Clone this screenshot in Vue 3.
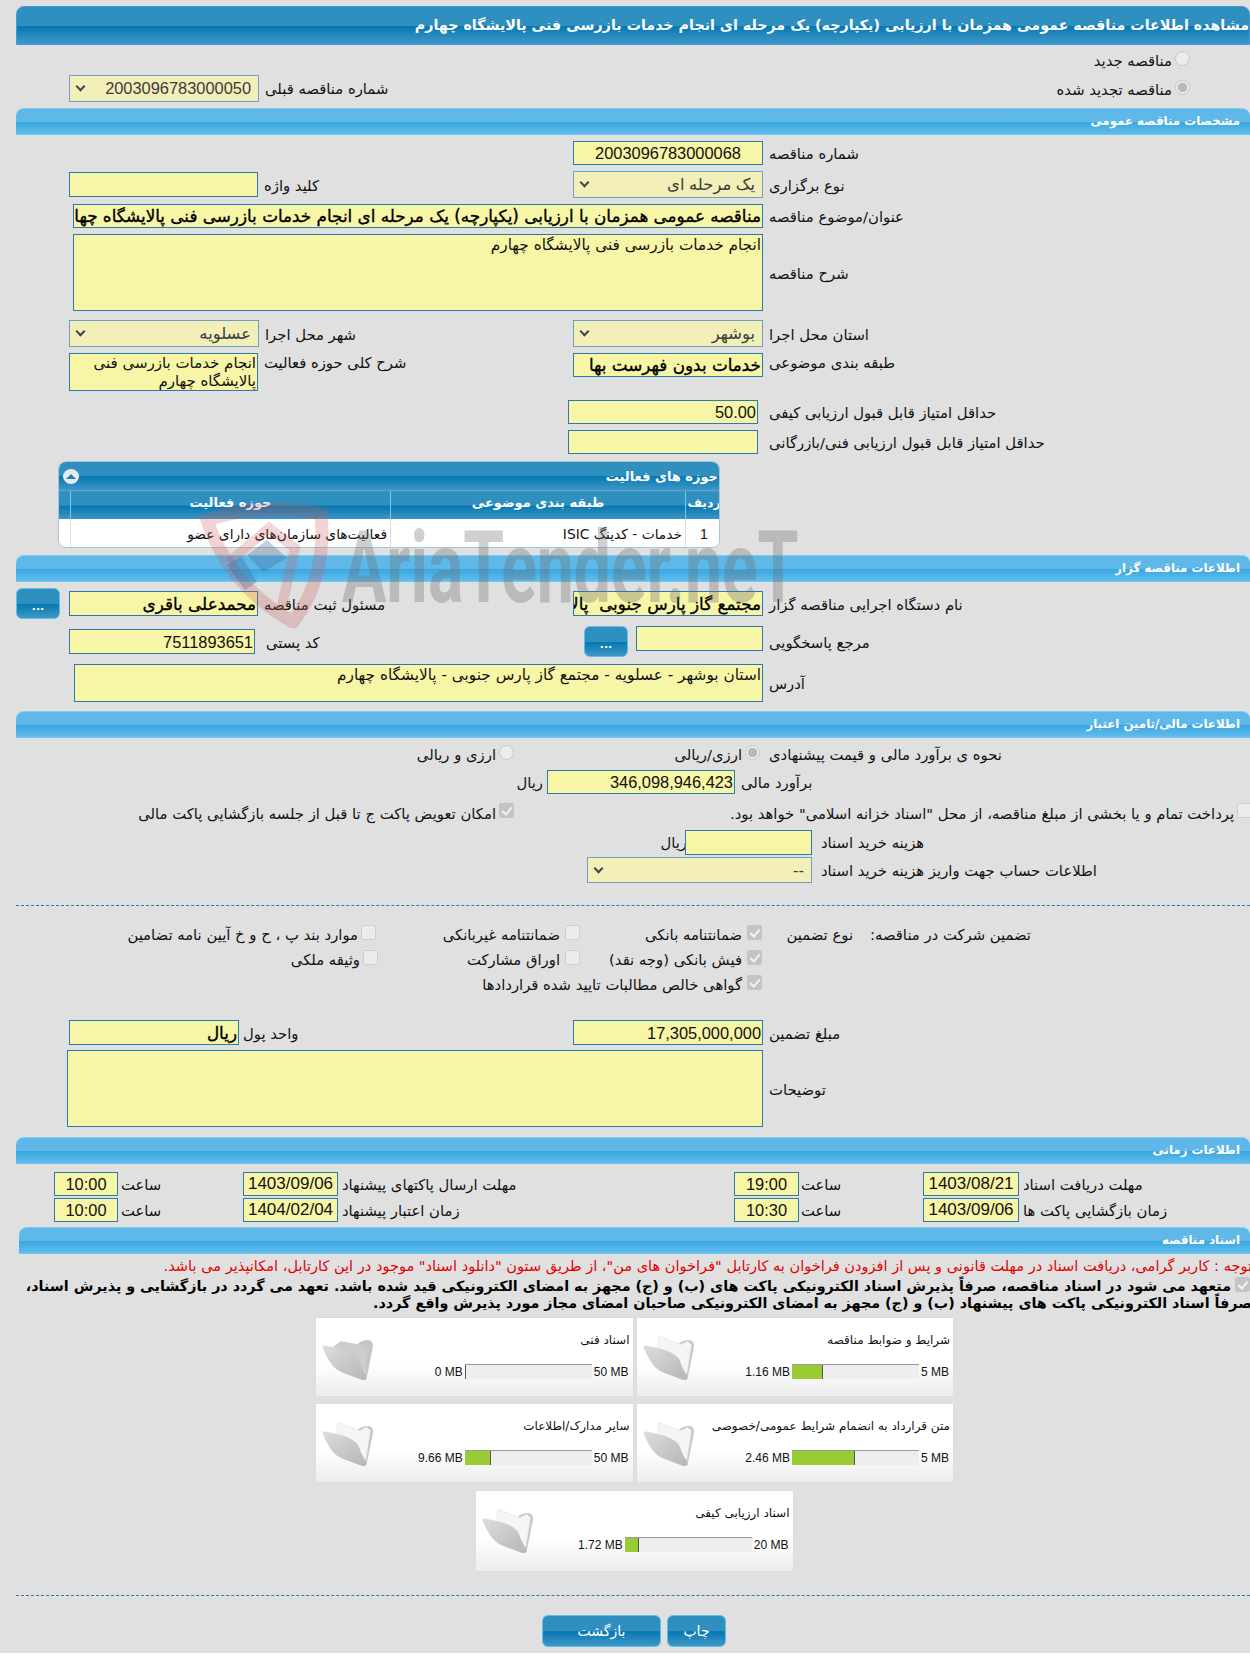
<script setup>
const cardRows = [
  [
    { title: 'اسناد فنی', used: '0 MB', max: '50 MB', pct: 0, paper: false },
    { title: 'شرایط و ضوابط مناقصه', used: '1.16 MB', max: '5 MB', pct: 24.5, paper: true }
  ],
  [
    { title: 'سایر مدارک/اطلاعات', used: '9.66 MB', max: '50 MB', pct: 20.7, paper: true },
    { title: 'متن قرارداد به انضمام شرایط عمومی/خصوصی', used: '2.46 MB', max: '5 MB', pct: 50, paper: true }
  ]
]
const lastCard = { title: 'اسناد ارزیابی کیفی', used: '1.72 MB', max: '20 MB', pct: 10.8, paper: true }
const timeRows = [
  { t1: '10:00', d1: '1403/09/06', l1: 'مهلت ارسال پاکتهای پیشنهاد', t2: '19:00', d2: '1403/08/21', l2: 'مهلت دریافت اسناد' },
  { t1: '10:00', d1: '1404/02/04', l1: 'زمان اعتبار پیشنهاد', t2: '10:30', d2: '1403/09/06', l2: 'زمان بازگشایی پاکت ها' }
]
const barWidth = (p) => p + '%'
</script>

<template>
  <div class="page">
    <div class="mainbar"><span>مشاهده اطلاعات مناقصه عمومی همزمان با ارزیابی (یکپارچه) یک مرحله ای انجام خدمات بازرسی فنی پالایشگاه چهارم</span></div>

    <div class="top">
      <div class="prev">
        <div class="sel w190 h27"><i class="chev"></i><span>2003096783000050</span></div>
        <label class="lb">شماره مناقصه قبلی</label>
      </div>
      <div class="radios">
        <div class="ropt"><span class="rad"></span><span class="lb0">مناقصه جدید</span></div>
        <div class="ropt"><span class="rad on"></span><span class="lb0">مناقصه تجدید شده</span></div>
      </div>
    </div>

    <div class="secbar"><span>مشخصات مناقصه عمومی</span></div>

    <div class="row mt6 h24">
      <div class="cl"></div>
      <div class="cr"><div class="inp w190 h24 num ctr"><span>2003096783000068</span></div><label class="lb">شماره مناقصه</label></div>
    </div>
    <div class="row mt6 h27">
      <div class="cl"><div class="inp w189 h25"></div><label class="lb">کلید واژه</label></div>
      <div class="cr"><div class="sel w190 h27"><i class="chev"></i><span>یک مرحله ای</span></div><label class="lb">نوع برگزاری</label></div>
    </div>
    <div class="row mt6 h24">
      <div class="wideinp"><div class="inp w690 h24 bold"><span class="nowrap">مناقصه عمومی همزمان با ارزیابی (یکپارچه) یک مرحله ای انجام خدمات بازرسی فنی پالایشگاه چهارم</span></div><label class="lb">عنوان/موضوع مناقصه</label></div>
    </div>
    <div class="row mt6 h77">
      <div class="wideinp"><div class="inp w690 h77 area"><span>انجام خدمات بازرسی فنی پالایشگاه چهارم</span></div><label class="lb">شرح مناقصه</label></div>
    </div>
    <div class="row mt9 h27">
      <div class="cl"><div class="sel w190 h27"><i class="chev"></i><span>عسلویه</span></div><label class="lb">شهر محل اجرا</label></div>
      <div class="cr"><div class="sel w190 h27"><i class="chev"></i><span>بوشهر</span></div><label class="lb">استان محل اجرا</label></div>
    </div>
    <div class="row mt6 h38 topal">
      <div class="cl"><div class="inp w189 h38 twoline"><span>انجام خدمات بازرسی فنی پالایشگاه چهارم</span></div><label class="lb lbtop">شرح کلی حوزه فعالیت</label></div>
      <div class="cr"><div class="inp w190 h24 bold"><span class="nowrap">خدمات بدون فهرست بها</span></div><label class="lb lbtop">طبقه بندی موضوعی</label></div>
    </div>
    <div class="row mt9 h24">
      <div class="cl"></div>
      <div class="cr shift"><div class="inp w190 h24 num"><span>50.00</span></div><label class="lb">حداقل امتیاز قابل قبول ارزیابی کیفی</label></div>
    </div>
    <div class="row mt6 h24">
      <div class="cl"></div>
      <div class="cr shift"><div class="inp w190 h24"></div><label class="lb">حداقل امتیاز قابل قبول ارزیابی فنی/بازرگانی</label></div>
    </div>

    <div class="panel">
      <div class="ptitle">
        <span class="collapse"><i></i></span>
        <span class="ptext">حوزه های فعالیت</span>
      </div>
      <table class="ptable">
        <thead>
          <tr>
            <th class="c0"></th>
            <th class="c1"><span class="thtxt">حوزه فعالیت</span></th>
            <th class="c2"><span class="thtxt">طبقه بندی موضوعی</span></th>
            <th class="c3"><span class="thtxt">ردیف</span></th>
          </tr>
        </thead>
        <tbody>
          <tr>
            <td class="c0"></td>
            <td class="c1">فعالیت‌های سازمان‌های دارای عضو</td>
            <td class="c2">خدمات - کدینگ ISIC</td>
            <td class="c3 num1">1</td>
          </tr>
        </tbody>
      </table>
    </div>

    <div class="secbar mt7"><span>اطلاعات مناقصه گزار</span></div>

    <div class="row0 mt6 h31">
      <button class="btn dots">...</button>
      <div class="cl2"><div class="inp w189 h25 bold"><span class="nowrap">محمدعلی باقری</span></div><label class="lb">مسئول ثبت مناقصه</label></div>
      <div class="cr"><div class="inp w190 h25 bold"><span class="nowrap">مجتمع گاز پارس جنوبی&nbsp; پالایشگاه چهارم</span></div><label class="lb">نام دستگاه اجرایی مناقصه گزار</label></div>
    </div>
    <div class="row mt7 h31">
      <div class="cl"><div class="inp w186 h25 num"><span>7511893651</span></div><label class="lb gap5">کد پستی</label></div>
      <div class="cr btnrow">
        <button class="btn dots">...</button>
        <div class="inp w127 h25 self-top"></div>
        <label class="lb">مرجع پاسخگویی</label>
      </div>
    </div>
    <div class="row mt7 h38">
      <div class="wideinp addr"><div class="inp w689 h38 area"><span>استان بوشهر - عسلویه - مجتمع گاز پارس جنوبی - پالایشگاه چهارم</span></div><label class="lb">آدرس</label></div>
    </div>

    <div class="secbar mt9"><span>اطلاعات مالی/تامین اعتبار</span></div>

    <div class="flat opts mt7 h15">
      <div class="cell x284"></div>
      <div class="cell x214"><span class="rad"></span><span class="lb0">ارزی و ریالی</span></div>
      <div class="cell x246"><span class="rad on"></span><span class="lb0">ارزی/ریالی</span></div>
      <label class="lb0 ml9">نحوه ی برآورد مالی و قیمت پیشنهادی</label>
    </div>
    <div class="flat mt10 h24">
      <div class="cell x531 pr4"><span class="lb0">ریال</span></div>
      <div class="inp w188 h24 num"><span>346,098,946,423</span></div>
      <label class="lb0 ml6">برآورد مالی</label>
    </div>
    <div class="flat opts deep mt9 h15 clipr">
      <div class="cell x498"><span class="cb on"></span><span class="lb0">امکان تعویض پاکت ج تا قبل از جلسه بازگشایی پاکت مالی</span></div>
      <div class="cell x738"><span class="cb"></span><span class="lb0">پرداخت تمام و یا بخشی از مبلغ مناقصه، از محل "اسناد خزانه اسلامی" خواهد بود.</span></div>
    </div>
    <div class="flat mt12 h25">
      <div class="cell x669"><span class="lb0 nudge">ریال</span></div>
      <div class="inp w127 h25"></div>
      <label class="lb0 ml9">هزینه خرید اسناد</label>
    </div>
    <div class="flat mt2 h26">
      <div class="cell x571"></div>
      <div class="sel w225 h26"><i class="chev"></i><span>--</span></div>
      <label class="lb0 ml9">اطلاعات حساب جهت واریز هزینه خرید اسناد</label>
    </div>

    <div class="dash d1"></div>

    <div class="flat opts mt19 h15">
      <div class="cell x360"><span class="cb"></span><span class="lb0">موارد بند پ ، ح و خ آیین نامه تضامین</span></div>
      <div class="cell x204 gp"><span class="cb"></span><span class="lb0">ضمانتنامه غیربانکی</span></div>
      <div class="cell x182 gp"><span class="cb on"></span><span class="lb0">ضمانتنامه بانکی</span></div>
      <div class="cell x91"><span class="lb0">نوع تضمین</span></div>
      <div class="cell x178"><span class="lb0">تضمین شرکت در مناقصه:</span></div>
    </div>
    <div class="flat opts mt10 h15">
      <div class="cell x362"><span class="cb"></span><span class="lb0">وثیقه ملکی</span></div>
      <div class="cell x202 gp"><span class="cb"></span><span class="lb0">اوراق مشارکت</span></div>
      <div class="cell x182 gp"><span class="cb on"></span><span class="lb0">فیش بانکی (وجه نقد)</span></div>
    </div>
    <div class="flat opts mt10 h15">
      <div class="cell x746 gp"><span class="cb on"></span><span class="lb0">گواهی خالص مطالبات تایید شده قراردادها</span></div>
    </div>

    <div class="row mt30 h25 amt">
      <div class="cl tight"><div class="inp w170 h25 bold"><span class="nowrap">ریال</span></div><label class="lb">واحد پول</label></div>
      <div class="cr"><div class="inp w190 h25 num"><span>17,305,000,000</span></div><label class="lb">مبلغ تضمین</label></div>
    </div>
    <div class="row mt5 h77">
      <div class="wideinp desc"><div class="inp w696 h77"></div><label class="lb">توضیحات</label></div>
    </div>

    <div class="secbar mt10"><span>اطلاعات زمانی</span></div>

    <div v-for="(t, i) in timeRows" :key="i" class="timerow" :class="i ? 'mt2' : 'mt8'">
      <div class="inp w64 h24 ctr tm"><span>{{ t.t1 }}</span></div>
      <label class="lb0 tl1">ساعت</label>
      <div class="inp w95 h24 ctr dt"><span>{{ t.d1 }}</span></div>
      <label class="lb0 tl2">{{ t.l1 }}</label>
      <div class="inp w65 h24 ctr tm"><span>{{ t.t2 }}</span></div>
      <label class="lb0 tl3">ساعت</label>
      <div class="inp w96 h24 ctr dt"><span>{{ t.d2 }}</span></div>
      <label class="lb0 tl4">{{ t.l2 }}</label>
    </div>

    <div class="secbar docs mt5"><span>اسناد مناقصه</span></div>

    <div class="note">توجه : کاربر گرامی، دریافت اسناد در مهلت قانونی و پس از افزودن فراخوان به کارتابل "فراخوان های من"، از طریق ستون "دانلود اسناد" موجود در این کارتابل، امکانپذیر می باشد.</div>
    <div class="pledge first"><span class="cb on"></span><span>متعهد می شود در اسناد مناقصه، صرفاً پذیرش اسناد الکترونیکی پاکت های (ب) و (ج) مجهز به امضای الکترونیکی قید شده باشد. تعهد می گردد در بازگشایی و پذیرش اسناد،</span></div>
    <div class="pledge">صرفاً اسناد الکترونیکی پاکت های پیشنهاد (ب) و (ج) مجهز به امضای الکترونیکی صاحبان امضای مجاز مورد پذیرش واقع گردد.</div>

    <svg class="defs" width="0" height="0" aria-hidden="true">
      <defs>
        <linearGradient id="fg" x1="0" y1="0" x2="1" y2="1">
          <stop offset="0" stop-color="#dddddd"/>
          <stop offset="1" stop-color="#b6b6b6"/>
        </linearGradient>
      </defs>
    </svg>

    <div v-for="(row, ri) in cardRows" :key="ri" class="cardrow" :class="{ second: ri === 1 }">
      <div v-for="c in row" :key="c.title" class="card">
        <svg class="folder" viewBox="10 50 165 145">
          <path d="M125 78 Q150 62 165 72 Q172 80 168 95 L150 185 L130 170 Z" fill="#c6c6c6"/>
          <path v-if="c.paper" d="M62 60 Q68 55 75 62 L130 82 L150 72 L162 82 L148 170 L60 100 Z" fill="#f5f5f5" stroke="#e4e4e4" stroke-width="2"/>
          <path v-else d="M50 88 L72 72 L130 82 L150 100 L148 170 L70 120 Z" fill="#cdcdcd"/>
          <path d="M18 92 Q14 84 26 85 L60 92 Q100 100 122 122 Q128 130 132 145 L150 183 Q150 192 135 188 L80 168 Q55 158 40 135 Q25 112 18 92 Z" fill="url(#fg)"/>
        </svg>
        <div class="info">
          <div class="ctitle">{{ c.title }}</div>
          <div class="cbar">
            <span class="mb used">{{ c.used }}</span>
            <span class="track"><i class="fill" :style="{ width: barWidth(c.pct) }"></i></span>
            <span class="mb">{{ c.max }}</span>
          </div>
        </div>
      </div>
    </div>
    <div class="cardrow third">
      <div class="card tall">
        <svg class="folder" viewBox="10 50 165 145">
          <path d="M125 78 Q150 62 165 72 Q172 80 168 95 L150 185 L130 170 Z" fill="#c6c6c6"/>
          <path d="M62 60 Q68 55 75 62 L130 82 L150 72 L162 82 L148 170 L60 100 Z" fill="#f5f5f5" stroke="#e4e4e4" stroke-width="2"/>
          <path d="M18 92 Q14 84 26 85 L60 92 Q100 100 122 122 Q128 130 132 145 L150 183 Q150 192 135 188 L80 168 Q55 158 40 135 Q25 112 18 92 Z" fill="url(#fg)"/>
        </svg>
        <div class="info">
          <div class="ctitle">{{ lastCard.title }}</div>
          <div class="cbar">
            <span class="mb used">{{ lastCard.used }}</span>
            <span class="track"><i class="fill" :style="{ width: barWidth(lastCard.pct) }"></i></span>
            <span class="mb">{{ lastCard.max }}</span>
          </div>
        </div>
      </div>
    </div>

    <div class="dash d2"></div>

    <div class="actions">
      <button class="btn back">بازگشت</button>
      <button class="btn print">چاپ</button>
    </div>

    <div class="wm" aria-hidden="true">
      <svg class="shield" viewBox="0 0 130 130">
        <path d="M8 22 Q65 4 122 16 Q128 80 94 124 Q30 88 8 22 Z" fill="none" stroke="rgba(205,85,85,.26)" stroke-width="13"/>
        <path d="M30 64 L70 30 L96 50 L82 112" fill="none" stroke="rgba(205,85,85,.24)" stroke-width="10"/>
        <path d="M28 67 L43 59 L58 84 L46 92 Z" fill="rgba(55,95,140,.3)"/>
        <path d="M48 57 L68 42 L88 60 L64 74 Z" fill="rgba(55,95,140,.3)"/>
      </svg>
      <span class="wmtext">AriaTender.neT</span>
    </div>
  </div>
</template>

<style>
html, body { margin: 0; background: #fff; }
</style>

<style scoped>
.page {
  position: relative;
  box-sizing: border-box;
  width: 1250px;
  height: 1653px;
  padding: 6px 0 0 16px;
  overflow: hidden;
  background: #e0e0e0;
  font-family: "DejaVu Sans", sans-serif;
  font-size: 14.8px;
  color: #111;
}
.mainbar {
  box-sizing: border-box;
  width: 1234px;
  height: 39px;
  border: 1px solid #3a9de0;
  border-radius: 8px 8px 0 0;
  background: linear-gradient(#2f90bf 0, #2f90bf 50%, #0678b2 52%, #4098c8 100%);
  color: #fff;
  font-weight: bold;
  font-size: 14.25px;
  line-height: 36px;
  direction: rtl;
  white-space: nowrap;
  overflow: hidden;
}
.secbar {
  box-sizing: border-box;
  width: 1234px;
  height: 27px;
  border-radius: 8px 8px 0 0;
  border-top: 1px solid #7fcdf0;
  border-bottom: 1px solid #6cc8f0;
  background: linear-gradient(#60b8e8 0, #60b8e8 50%, #38a6e0 52%, #62bdec 100%);
  color: #fff;
  font-weight: bold;
  font-size: 11.8px;
  line-height: 25px;
  direction: rtl;
  padding-right: 10px;
  white-space: nowrap;
}
.secbar.docs { width: 1231px; margin-left: 3px; }
.top { display: flex; height: 63px; }
.prev { display: flex; align-items: flex-start; margin: 30px 0 0 53px; gap: 6px; }
.prev .lb { margin-top: 5px; }
.radios { margin-left: auto; margin-right: 60px; margin-top: 6px; display: flex; flex-direction: column; gap: 14px; width: 300px; }
.ropt { display: flex; direction: rtl; align-items: flex-start; height: 15px; gap: 3px; }
.ropt .lb0 { margin-top: 1px; }

.row { display: flex; align-items: center; margin-left: 53px; }
.row0 { display: flex; align-items: center; }
.topal { align-items: flex-start; }
.cl { width: 504px; display: flex; gap: 6px; align-items: center; flex: none; }
.cl.tight { gap: 4px; }
.cl2 { width: 504px; margin-left: 9px; display: flex; gap: 6px; align-items: center; flex: none; }
.cr { display: flex; gap: 6px; align-items: center; }
.topal .cl, .topal .cr { align-items: flex-start; }
.cr.shift { margin-left: -5px; gap: 11px; }
.btnrow { margin-left: 11px; gap: 8px; }
.btnrow .lb { margin-left: -2px; margin-top: 1px; }
.self-top { align-self: flex-start; }
.gap5 { margin-left: 5px; }
.wideinp { display: flex; gap: 6px; align-items: center; margin-left: 4px; }
.wideinp.addr { margin-left: 5px; }
.wideinp.desc { margin-left: -2px; }

.inp, .sel {
  box-sizing: border-box;
  flex: none;
  direction: rtl;
  overflow: hidden;
  display: flex;
  align-items: center;
  color: #111;
}
.inp {
  background: #f7f5a6;
  border: 1px solid #2a7ab0;
  font-size: 15px;
  padding: 0 1px;
}
.sel {
  background: #f2efb9;
  border: 1px solid #6d9fc0;
  font-size: 15px;
  padding: 0 7px;
  justify-content: space-between;
  flex-direction: row-reverse;
  color: #3c3c3c;
}
.sel span { direction: rtl; font-family: "Liberation Sans", "DejaVu Sans", sans-serif; font-size: 16.4px; }
.chev {
  display: block;
  width: 7px;
  height: 7px;
  margin: -4px 0 0 0;
  border-right: 2px solid #444;
  border-bottom: 2px solid #444;
  transform: rotate(45deg);
  box-sizing: border-box;
  flex: none;
}
.num span, .tm span, .dt span { font-family: "Liberation Sans", "DejaVu Sans", sans-serif; font-size: 16.4px; }
.dt span { font-size: 17px; }
.num { padding: 1px 1px 0; }
.ctr { justify-content: center; }
.bold { font-size: 16.8px; -webkit-text-stroke: .35px #000; color: #000; }
.nowrap { white-space: nowrap; }
.area { align-items: flex-start; padding-top: 1px; font-size: 15.3px; }
.twoline { align-items: flex-start; font-size: 15px; line-height: 18px; }
.lb, .lb0 { direction: rtl; white-space: nowrap; font-size: 14.8px; flex: none; }
.lb { margin-top: 1px; }
.lbtop { margin-top: 1px; }
.ml6 { margin-left: 6px; }
.ml9 { margin-left: 9px; }
.nudge { margin-right: -2px; }

.w64 { width: 64px; } .w65 { width: 65px; } .w95 { width: 95px; } .w96 { width: 96px; }
.w127 { width: 127px; } .w170 { width: 170px; } .w186 { width: 186px; } .w188 { width: 188px; }
.w189 { width: 189px; } .w190 { width: 190px; } .w225 { width: 225px; } .w689 { width: 689px; }
.w690 { width: 690px; } .w696 { width: 696px; }
.h15 { height: 15px; } .h24 { height: 24px; } .h25 { height: 25px; } .h26 { height: 26px; }
.h27 { height: 27px; } .h31 { height: 31px; } .h38 { height: 38px; } .h77 { height: 77px; }
.mt2 { margin-top: 2px; } .mt5 { margin-top: 5px; } .mt6 { margin-top: 6px; } .mt7 { margin-top: 7px; }
.mt8 { margin-top: 8px; } .mt9 { margin-top: 9px; } .mt10 { margin-top: 10px; } .mt12 { margin-top: 12px; }
.mt19 { margin-top: 19px; } .mt30 { margin-top: 30px; }

.panel {
  box-sizing: border-box;
  width: 662px;
  height: 87px;
  margin: 7px 0 0 42px;
  border: 1px solid #a5c5dc;
  border-radius: 8px;
  overflow: hidden;
  background: #fff;
}
.ptitle {
  height: 28px;
  display: flex;
  align-items: center;
  justify-content: space-between;
  background: linear-gradient(#2f90bf 0, #2f90bf 50%, #0678b2 52%, #3f97c6 100%);
  color: #fff;
  font-weight: bold;
  font-size: 13px;
  padding: 0 1px 0 4px;
}
.ptext { direction: rtl; }
.collapse {
  width: 16px;
  height: 15px;
  border-radius: 50%;
  background: #e4ecf2;
  display: flex;
  align-items: center;
  justify-content: center;
}
.collapse i {
  width: 0;
  height: 0;
  border-left: 5px solid transparent;
  border-right: 5px solid transparent;
  border-bottom: 5px solid #2f7aa8;
}
.ptable { width: 660px; border-collapse: collapse; table-layout: fixed; direction: ltr; }
.ptable th {
  height: 28px;
  padding: 0;
  background: linear-gradient(#2f90bf 0, #2f90bf 50%, #0678b2 52%, #3f97c6 100%);
  border-top: 1px solid #5aa9d4;
  border-left: 1px solid #7cc3ea;
  color: #fff;
  font-size: 13px;
  font-weight: bold;
  direction: rtl;
  vertical-align: top;
  line-height: 24px;
  white-space: nowrap;
  overflow: hidden;
}
.ptable .c3 .thtxt { font-size: 12.5px; }
.ptable td {
  height: 29px;
  padding: 0 3px;
  border-left: 1px solid #ddd;
  font-size: 13.8px;
  direction: rtl;
  white-space: nowrap;
  overflow: hidden;
  background: #fff;
}
.ptable .c0 { width: 11px; border-left: 0; }
.ptable .c1 { width: 319px; }
.ptable .c2 { width: 294px; }
.ptable .c3 { width: 36px; }
.num1 { text-align: center; font-family: "Liberation Sans", sans-serif; font-size: 14px !important; }

.btn {
  box-sizing: border-box;
  border: 1px solid #5cc0e8;
  border-radius: 6px;
  background: linear-gradient(#2f90bf 0, #2f90bf 50%, #0678b2 52%, #3f97c6 100%);
  color: #fff;
  padding: 0;
  font-family: "DejaVu Sans", sans-serif;
}
.dots { width: 44px; height: 31px; font-size: 11px; font-weight: bold; padding-top: 6px; flex: none; }

.flat { display: flex; align-items: center; }
.clipr { width: 1250px; }
.cell { display: flex; direction: rtl; flex: none; align-items: center; gap: 3px; }
.cell.gp { gap: 5px; }
.opts .lb0 { padding-top: 4px; }
.deep .lb0 { padding-top: 6px; }
.x91 { width: 91px; } .x178 { width: 178px; } .x182 { width: 182px; } .x202 { width: 202px; }
.x204 { width: 204px; } .x214 { width: 214px; } .x246 { width: 246px; } .x284 { width: 284px; }
.x360 { width: 360px; } .x362 { width: 362px; } .x498 { width: 498px; } .x531 { width: 531px; }
.x571 { width: 571px; } .x669 { width: 669px; } .x738 { width: 738px; } .x746 { width: 746px; }
.pr4 { padding-right: 4px; box-sizing: border-box; }

.rad {
  flex: none;
  box-sizing: border-box;
  width: 15px;
  height: 15px;
  border-radius: 50%;
  background: #ececec;
  border: 1px solid #c6c6c6;
  display: block;
}
.rad.on { background: radial-gradient(circle, #b9b9b9 0, #b9b9b9 4.5px, #ececec 5px); }
.cb {
  flex: none;
  box-sizing: border-box;
  position: relative;
  width: 15px;
  height: 15px;
  border-radius: 2px;
  background: #ececec;
  border: 1px solid #cfcfcf;
  display: block;
}
.cb.on { background: #c4c4c4; border-color: #c4c4c4; }
.cb.on::after {
  content: "";
  position: absolute;
  left: 4px;
  top: 1px;
  width: 4px;
  height: 8px;
  border-right: 2px solid #f2f2f2;
  border-bottom: 2px solid #f2f2f2;
  transform: rotate(40deg);
}

.dash { width: 1234px; border-top: 1px dashed #2e78a8; }
.d1 { margin-top: 22px; }
.d2 { margin-top: 24px; }

.timerow { display: flex; align-items: center; margin-left: 38px; height: 24px; }
.tl1 { width: 122px; margin-left: 3px; }
.tl2 { width: 392px; margin-left: 4px; }
.tl3 { width: 122px; margin-left: 2px; }
.tl4 { margin-left: 4px; }
.tl1, .tl2, .tl3 { display: flex; justify-content: flex-start; direction: ltr; }

.note {
  width: 1236px;
  margin-top: 2px;
  height: 20px;
  line-height: 20px;
  direction: rtl;
  color: #e30000;
  font-size: 14.55px;
  white-space: nowrap;
}
.pledge {
  width: 1236px;
  height: 17px;
  line-height: 17px;
  direction: rtl;
  font-weight: bold;
  font-size: 14.3px;
  white-space: nowrap;
  color: #000;
}
.pledge.first { display: flex; gap: 4px; width: 1234px; margin-top: 2px; align-items: flex-start; }
.pledge.first .cb { margin-top: -1px; }
.defs { position: absolute; }
.cardrow { display: flex; gap: 4px; margin: 6px 0 0 300px; }
.cardrow.second { margin-top: 8px; }
.cardrow.third { margin: 9px 0 0 460px; }
.card {
  box-sizing: border-box;
  width: 316.5px;
  height: 78px;
  display: flex;
  padding: 3px;
  background: linear-gradient(#fff 0, #fff 60%, #ececec 100%);
  box-shadow: 0 0 1px #ccc;
}
.card.tall { height: 80px; }
.folder { width: 55px; height: 48px; margin: 13px 0 0 1px; flex: none; filter: blur(.4px); }
.info { flex: 1; display: flex; flex-direction: column; align-items: flex-end; }
.ctitle { direction: rtl; font-size: 12px; margin-top: 10px; height: 18px; line-height: 18px; white-space: nowrap; }
.cbar { display: flex; align-items: center; margin-top: 15px; padding-right: 1px; }
.mb { font-family: "Liberation Sans", sans-serif; font-size: 12px; padding-left: 2px; white-space: nowrap; }
.mb.used { padding: 0 2px 0 0; }
.track {
  display: block;
  box-sizing: border-box;
  width: 127px;
  height: 15px;
  background: #eee;
  border-top: 1px solid #999;
}
.fill {
  display: block;
  box-sizing: border-box;
  height: 14px;
  min-width: 1px;
  background: #9c3;
  border-right: 1px solid #555;
}
.actions { display: flex; gap: 6px; margin: 19px 0 0 526px; }
.back { width: 119px; height: 32px; font-size: 14px; }
.print { width: 59px; height: 32px; font-size: 14px; }

.wm {
  position: absolute;
  left: 199px;
  top: 498px;
  display: flex;
  pointer-events: none;
}
.shield { width: 130px; height: 130px; flex: none; }
.wmtext {
  display: block;
  margin: 25px 0 0 13px;
  font-family: Roboto, "Liberation Sans", sans-serif;
  font-weight: 700;
  font-size: 100px;
  line-height: 90px;
  color: rgba(105, 105, 105, .32);
  transform: scaleX(.66);
  transform-origin: left top;
  white-space: nowrap;
}
</style>
